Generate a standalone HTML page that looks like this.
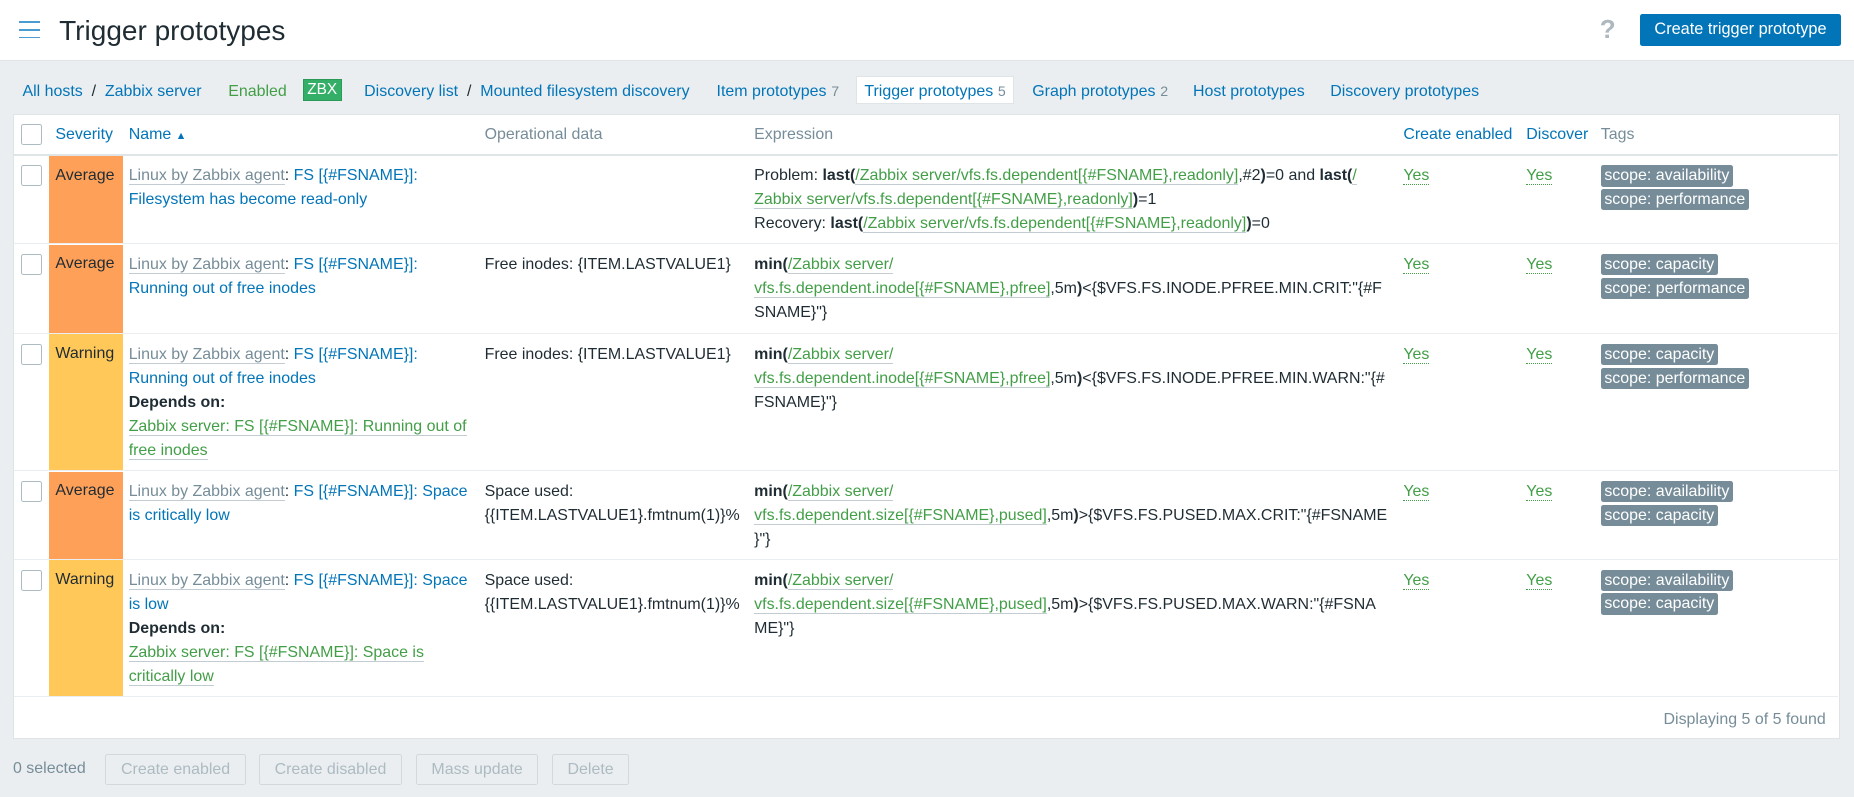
<!DOCTYPE html>
<html><head><meta charset="utf-8"><style>
html,body{margin:0;padding:0;}
body{width:1568px;height:674px;zoom:1.18240;background:#ebeef0;font-family:"Liberation Sans",Arial,sans-serif;font-size:13.5px;color:#1f2c33;overflow:hidden;position:relative;}
a{color:#0275b8;text-decoration:none;}
.hdr{position:absolute;left:0;top:0;width:1568px;height:51px;background:#fff;border-bottom:1px solid #dfe4e7;}
.ham{position:absolute;left:16px;top:18px;width:18px;}
.ham i{display:block;height:1.5px;background:#4b9cd3;margin-bottom:5px;}
h1{position:absolute;left:50px;top:13px;margin:0;font-weight:normal;font-size:23.7px;color:#1f2c33;}
.q{position:absolute;left:1353px;top:12px;font-size:22px;color:#adb8bf;font-weight:bold;}
.btn{position:absolute;left:1387px;top:12px;width:170px;height:27px;background:#0275b8;color:#fff;border-radius:2px;text-align:center;line-height:27px;font-size:13.8px;}
.nav{position:absolute;top:69px;left:19px;height:20px;line-height:17px;white-space:nowrap;}
.nav span{position:absolute;top:0;}
.cnt{color:#768d99;font-size:12px;margin-left:4px;position:static!important;}
.tab{position:absolute;left:724px;top:64px;width:134px;height:24px;background:#fff;border:1px solid #dfe4e7;box-sizing:border-box;}
.zbx{background:#34af67;color:#fff;padding:1px 3px;border:1px solid #2b9a58;font-size:13px;}
.box{position:absolute;left:11px;top:96px;width:1545px;height:529px;background:#fff;border:1px solid #dfe4e7;box-sizing:border-box;}
.row{position:absolute;left:0;width:1543px;border-bottom:1px solid #ebeef0;}
.c{position:absolute;top:0;line-height:20.3px;white-space:nowrap;}
.cb{position:absolute;left:6px;width:16px;height:16px;border:1px solid #acbbc2;border-radius:2px;background:#fff;}
.sev{position:absolute;left:30px;top:0;width:62px;bottom:0;box-sizing:border-box;padding:9px 0 0 5px;}
.g{color:#768d99;border-bottom:1px solid #c2ccd2;}
.gl{color:#429e47;border-bottom:1px solid #c2ccd2;}
.y{color:#429e47;border-bottom:1px dotted #429e47;}
.tg{line-height:18px;}
.tag{display:table;background:#768d99;color:#fff;padding:0 3px;border-radius:2px;line-height:18px;margin-bottom:2px;}
.th{color:#768d99;}
b{font-weight:bold;}
.bb{position:absolute;top:638px;height:26px;border:1px solid #d2d8dc;background:#ebeef0;color:#acbbc2;line-height:26px;text-align:center;box-sizing:border-box;border-radius:2px;}
</style></head><body>
<div class="hdr">
<div class="ham"><i></i><i></i><i></i></div>
<h1>Trigger prototypes</h1>
<div class="q">?</div>
<div class="btn">Create trigger prototype</div>
</div>
<div class="tab"></div>
<div class="nav">
<span style="left:0"><a>All hosts</a> &nbsp;/&nbsp; <a>Zabbix server</a></span>
<span style="left:174px;color:#429e47">Enabled</span>
<span style="left:237px;top:-1px"><span class="zbx" style="position:static">ZBX</span></span>
<span style="left:289px"><a>Discovery list</a> &nbsp;/&nbsp; <a>Mounted filesystem discovery</a></span>
<span style="left:587px"><a>Item prototypes</a><span class="cnt">7</span></span>
<span style="left:712px"><a>Trigger prototypes</a><span class="cnt">5</span></span>
<span style="left:854px"><a>Graph prototypes</a><span class="cnt">2</span></span>
<span style="left:990px"><a>Host prototypes</a></span>
<span style="left:1106px"><a>Discovery prototypes</a></span>
</div>
<div class="box">
<div class="row" style="top:0;height:33px;border-bottom:2px solid #dfe4e7;">
<div class="cb" style="top:8px"></div>
<div class="c" style="left:35px;top:7px"><a>Severity</a></div>
<div class="c" style="left:97px;top:7px"><a>Name</a> <span style="color:#0275b8;font-size:9px">▲</span></div>
<div class="c th" style="left:398px;top:7px">Operational data</div>
<div class="c th" style="left:626px;top:7px">Expression</div>
<div class="c" style="left:1175px;top:7px"><a>Create enabled</a></div>
<div class="c" style="left:1279px;top:7px"><a>Discover</a></div>
<div class="c th" style="left:1342px;top:7px">Tags</div>
</div>

<div class="row" style="top:35px;height:74px;">
<div class="cb" style="top:8px"></div>
<div class="sev" style="background:#ffa059">Average</div>
<div class="c" style="left:97px;top:7px"><span class="g">Linux by Zabbix agent</span>: <a>FS [{#FSNAME}]:<br>Filesystem has become read-only</a></div>
<div class="c" style="left:626px;top:7px">Problem: <b>last(</b><span class="gl">/Zabbix server/vfs.fs.dependent[{#FSNAME},readonly]</span>,#2<b>)</b>=0 and <b>last(</b><span class="gl">/<br>Zabbix server/vfs.fs.dependent[{#FSNAME},readonly]</span><b>)</b>=1<br>Recovery: <b>last(</b><span class="gl">/Zabbix server/vfs.fs.dependent[{#FSNAME},readonly]</span><b>)</b>=0</div>
<div class="c" style="left:1175px;top:7px"><span class="y">Yes</span></div>
<div class="c" style="left:1279px;top:7px"><span class="y">Yes</span></div>
<div class="c tg" style="left:1342px;top:8px"><span class="tag">scope: availability</span><span class="tag">scope: performance</span></div>
</div>

<div class="row" style="top:110px;height:75px;">
<div class="cb" style="top:8px"></div>
<div class="sev" style="background:#ffa059">Average</div>
<div class="c" style="left:97px;top:7px"><span class="g">Linux by Zabbix agent</span>: <a>FS [{#FSNAME}]:<br>Running out of free inodes</a></div>
<div class="c" style="left:398px;top:7px">Free inodes: {ITEM.LASTVALUE1}</div>
<div class="c" style="left:626px;top:7px"><b>min(</b><span class="gl">/Zabbix server/</span><br><span class="gl">vfs.fs.dependent.inode[{#FSNAME},pfree]</span>,5m<b>)</b>&lt;{$VFS.FS.INODE.PFREE.MIN.CRIT:"{#F<br>SNAME}"}</div>
<div class="c" style="left:1175px;top:7px"><span class="y">Yes</span></div>
<div class="c" style="left:1279px;top:7px"><span class="y">Yes</span></div>
<div class="c tg" style="left:1342px;top:8px"><span class="tag">scope: capacity</span><span class="tag">scope: performance</span></div>
</div>

<div class="row" style="top:186px;height:115px;">
<div class="cb" style="top:8px"></div>
<div class="sev" style="background:#ffc859">Warning</div>
<div class="c" style="left:97px;top:7px"><span class="g">Linux by Zabbix agent</span>: <a>FS [{#FSNAME}]:<br>Running out of free inodes</a><br><b>Depends on:</b><br><span class="gl">Zabbix server: FS [{#FSNAME}]: Running out of</span><br><span class="gl">free inodes</span></div>
<div class="c" style="left:398px;top:7px">Free inodes: {ITEM.LASTVALUE1}</div>
<div class="c" style="left:626px;top:7px"><b>min(</b><span class="gl">/Zabbix server/</span><br><span class="gl">vfs.fs.dependent.inode[{#FSNAME},pfree]</span>,5m<b>)</b>&lt;{$VFS.FS.INODE.PFREE.MIN.WARN:"{#<br>FSNAME}"}</div>
<div class="c" style="left:1175px;top:7px"><span class="y">Yes</span></div>
<div class="c" style="left:1279px;top:7px"><span class="y">Yes</span></div>
<div class="c tg" style="left:1342px;top:8px"><span class="tag">scope: capacity</span><span class="tag">scope: performance</span></div>
</div>

<div class="row" style="top:302px;height:74px;">
<div class="cb" style="top:8px"></div>
<div class="sev" style="background:#ffa059">Average</div>
<div class="c" style="left:97px;top:7px"><span class="g">Linux by Zabbix agent</span>: <a>FS [{#FSNAME}]: Space<br>is critically low</a></div>
<div class="c" style="left:398px;top:7px">Space used:<br>{{ITEM.LASTVALUE1}.fmtnum(1)}%</div>
<div class="c" style="left:626px;top:7px"><b>min(</b><span class="gl">/Zabbix server/</span><br><span class="gl">vfs.fs.dependent.size[{#FSNAME},pused]</span>,5m<b>)</b>&gt;{$VFS.FS.PUSED.MAX.CRIT:"{#FSNAME<br>}"}</div>
<div class="c" style="left:1175px;top:7px"><span class="y">Yes</span></div>
<div class="c" style="left:1279px;top:7px"><span class="y">Yes</span></div>
<div class="c tg" style="left:1342px;top:8px"><span class="tag">scope: availability</span><span class="tag">scope: capacity</span></div>
</div>

<div class="row" style="top:377px;height:115px;">
<div class="cb" style="top:8px"></div>
<div class="sev" style="background:#ffc859">Warning</div>
<div class="c" style="left:97px;top:7px"><span class="g">Linux by Zabbix agent</span>: <a>FS [{#FSNAME}]: Space<br>is low</a><br><b>Depends on:</b><br><span class="gl">Zabbix server: FS [{#FSNAME}]: Space is</span><br><span class="gl">critically low</span></div>
<div class="c" style="left:398px;top:7px">Space used:<br>{{ITEM.LASTVALUE1}.fmtnum(1)}%</div>
<div class="c" style="left:626px;top:7px"><b>min(</b><span class="gl">/Zabbix server/</span><br><span class="gl">vfs.fs.dependent.size[{#FSNAME},pused]</span>,5m<b>)</b>&gt;{$VFS.FS.PUSED.MAX.WARN:"{#FSNA<br>ME}"}</div>
<div class="c" style="left:1175px;top:7px"><span class="y">Yes</span></div>
<div class="c" style="left:1279px;top:7px"><span class="y">Yes</span></div>
<div class="c tg" style="left:1342px;top:8px"><span class="tag">scope: availability</span><span class="tag">scope: capacity</span></div>
</div>

<div class="c" style="right:11px;top:502px;color:#768d99">Displaying 5 of 5 found</div>
</div>
<div style="position:absolute;left:11px;top:643px;color:#768d99">0 selected</div>
<div class="bb" style="left:89px;width:119px">Create enabled</div>
<div class="bb" style="left:219px;width:121px">Create disabled</div>
<div class="bb" style="left:352px;width:103px">Mass update</div>
<div class="bb" style="left:467px;width:65px">Delete</div>
</body></html>
